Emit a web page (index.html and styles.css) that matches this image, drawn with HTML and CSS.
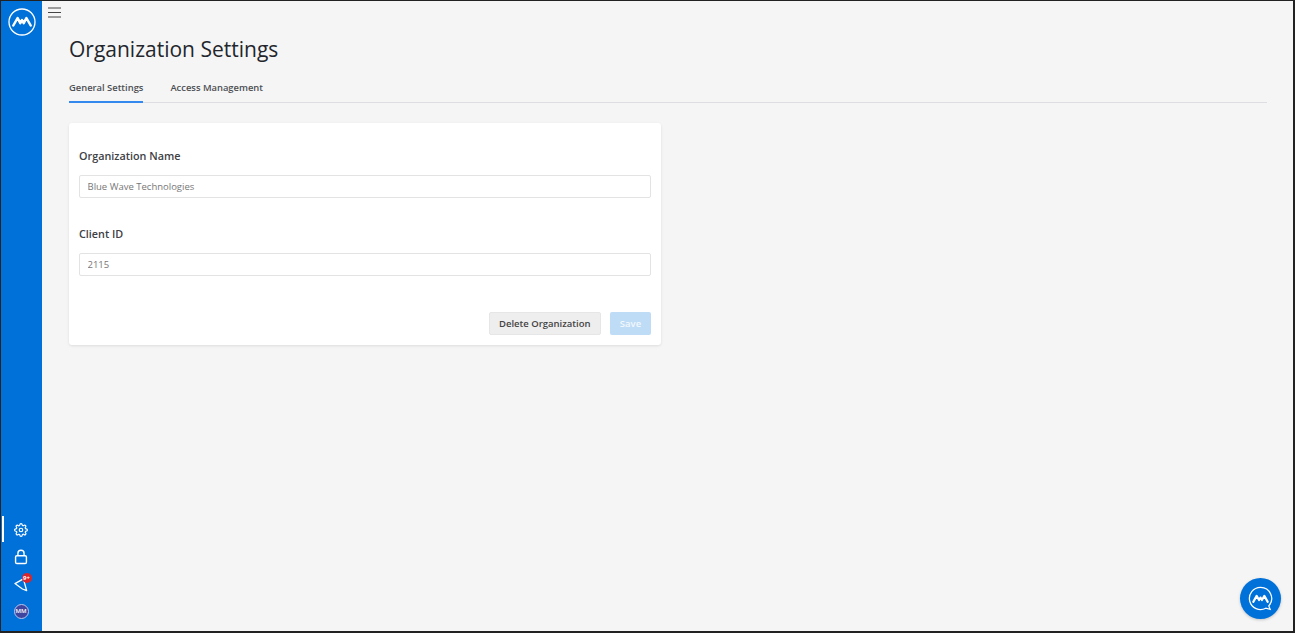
FILE: index.html
```html
<!DOCTYPE html>
<html lang="en">
<head>
<meta charset="utf-8">
<title>Organization Settings</title>
<link rel="stylesheet" href="styles.css">
</head>
<body>
<div class="frame">
  <aside class="sidebar">
    <svg class="logo" viewBox="0 0 28 28" width="28" height="28" fill="none">
      <circle cx="14" cy="14" r="13" stroke="#fff" stroke-width="1.300"/>
      <path d="M5.300 17.500 9.600 10 12.300 15.200 14 12 15.700 15.200 18.400 10 22.700 17.500" stroke="#fff" stroke-width="2.500" stroke-linejoin="round" stroke-linecap="round"/>
    </svg>
    <nav class="side-nav">
      <a class="side-item active">
        <svg viewBox="0 0 24 24" width="14" height="14" fill="none" stroke="#fff" stroke-width="2"><circle cx="12" cy="12" r="3"/><path d="M19.4 15a1.65 1.65 0 0 0 .33 1.82l.06.06a2 2 0 0 1 0 2.83 2 2 0 0 1-2.83 0l-.06-.06a1.65 1.65 0 0 0-1.82-.33 1.65 1.65 0 0 0-1 1.51V21a2 2 0 0 1-2 2 2 2 0 0 1-2-2v-.09A1.65 1.65 0 0 0 9 19.4a1.65 1.65 0 0 0-1.82.33l-.06.06a2 2 0 0 1-2.83 0 2 2 0 0 1 0-2.83l.06-.06a1.65 1.65 0 0 0 .33-1.82 1.65 1.65 0 0 0-1.51-1H3a2 2 0 0 1-2-2 2 2 0 0 1 2-2h.09A1.65 1.65 0 0 0 4.600 9a1.65 1.65 0 0 0-.33-1.82l-.06-.06a2 2 0 0 1 0-2.83 2 2 0 0 1 2.83 0l.06.06a1.65 1.65 0 0 0 1.82.33H9a1.65 1.65 0 0 0 1-1.51V3a2 2 0 0 1 2-2 2 2 0 0 1 2 2v.09a1.65 1.65 0 0 0 1 1.51 1.65 1.65 0 0 0 1.82-.33l.06-.06a2 2 0 0 1 2.83 0 2 2 0 0 1 0 2.83l-.06.06a1.65 1.65 0 0 0-.33 1.82V9a1.65 1.65 0 0 0 1.51 1H21a2 2 0 0 1 2 2 2 2 0 0 1-2 2h-.09a1.65 1.65 0 0 0-1.51 1z"/></svg>
      </a>
      <a class="side-item">
        <svg viewBox="0 0 16 18" width="14" height="16" fill="none" stroke="#fff" stroke-width="1.600"><rect x="1.800" y="7.500" width="12.400" height="9" rx="1.500"/><path d="M4.500 7.500V4.800a3.500 3.500 0 0 1 7 0v2.700"/></svg>
      </a>
      <a class="side-item">
        <svg viewBox="0 0 16 16" width="15" height="15" fill="none" stroke="#fff" stroke-width="1.400" stroke-linejoin="round"><path d="M1 7 10 2 13.500 14.500 9 12.800 1 7z"/></svg>
        <span class="badge">9+</span>
      </a>
      <a class="side-item">
        <span class="avatar">MM</span>
      </a>
    </nav>
  </aside>
  <main class="main">
    <div class="topbar">
      <svg viewBox="0 0 13 11" width="13" height="11" stroke="#444" stroke-width="1"><path d="M0 1h13M0 5.500h13M0 10h13"/></svg>
    </div>
    <div class="content">
      <h1 class="title">Organization Settings</h1>
      <div class="tabs">
        <a class="tab tab-active">General Settings</a>
        <a class="tab">Access Management</a>
      </div>
      <section class="card">
        <div class="field">
          <label class="label">Organization Name</label>
          <input class="input" type="text" value="Blue Wave Technologies">
        </div>
        <div class="field">
          <label class="label">Client ID</label>
          <input class="input" type="text" value="2115">
        </div>
        <div class="actions">
          <button class="btn btn-grey">Delete Organization</button>
          <button class="btn btn-save">Save</button>
        </div>
      </section>
    </div>
  </main>
  <a class="chat">
    <svg viewBox="0 0 28 28" width="27" height="27" fill="none">
      <path d="M14 2.500a11.500 11.500 0 1 0 5.500 21.600l4.500 1.200-1.400-3.600A11.500 11.500 0 0 0 14 2.500z" stroke="#fff" stroke-width="1.300"/>
      <path d="M6.500 17.500 10 11.300l2.500 4.300L14 13l1.500 2.600 2.500-4.300L21.500 17.500" stroke="#fff" stroke-width="2.200" stroke-linejoin="round" stroke-linecap="round"/>
    </svg>
  </a>
</div>
</body>
</html>
```

FILE: styles.css
```css
* { box-sizing: border-box; }
html, body { margin: 0; height: 100%; }
body { font-family: "Open Sans", "Noto Sans", sans-serif; color: #333; overflow: hidden; }
.frame {
  position: relative;
  display: flex;
  width: 1295px;
  height: 633px;
  border-style: solid;
  border-color: #222;
  border-width: 1px 2px 2px 1px;
  background: #f5f5f5;
}
.sidebar {
  width: 41px;
  flex: none;
  background: #0071d9;
  display: flex;
  flex-direction: column;
  align-items: center;
  padding: 7px 0 5.500px;
}
.logo { display: block; }
.side-nav { margin-top: auto; width: 100%; display: flex; flex-direction: column; }
.side-item {
  position: relative;
  height: 27.300px;
  display: flex;
  align-items: center;
  justify-content: center;
  padding-right: 1px;
}
.side-item.active::before {
  content: "";
  position: absolute;
  left: 1px;
  top: 0;
  width: 2px;
  height: 26px;
  background: #fff;
}
.badge {
  position: absolute;
  left: 20.500px;
  top: 2.500px;
  width: 10px;
  height: 10px;
  border-radius: 50%;
  background: #d9262c;
  color: #fff;
  font-size: 6px;
  font-weight: 700;
  line-height: 10px;
  text-align: center;
}
.avatar {
  width: 15px;
  height: 15px;
  border-radius: 50%;
  background: #3f459f;
  border: 1px solid #b9c6ee;
  color: #fff;
  font-size: 6px;
  font-weight: 600;
  line-height: 13px;
  text-align: center;
}
.main { flex: 1; min-width: 0; display: flex; flex-direction: column; }
.topbar { height: 18px; padding: 6px 0 0 6px; }
.topbar svg { display: block; }
.content { padding: 0 26px 0 27px; }
.title {
  margin: 14px 0 0;
  font-size: 21px;
  line-height: 32px;
  font-weight: 500;
  color: #23262c;
}
.tabs {
  display: flex;
  gap: 27px;
  margin-top: 13px;
  border-bottom: 1px solid #dcdee1;
  height: 25px;
}
.tab {
  font-size: 9.400px;
  font-weight: 600;
  line-height: 20px;
  color: #4c4f54;
  height: 25px;
  white-space: nowrap;
}
.tab-active { border-bottom: 2px solid #3389ee; }
.card {
  width: 592px;
  margin-top: 19.500px;
  padding: 15.500px 10px 10.500px;
  background: #fff;
  border-radius: 3px;
  box-shadow: 0 1px 3px rgba(0,0,0,.1);
}
.field { margin-bottom: 18.500px; }
.label {
  display: block;
  font-size: 10.800px;
  line-height: 36px;
  font-weight: 600;
  color: #3d4045;
}
.input {
  display: block;
  width: 100%;
  height: 22.500px;
  margin-top: 1px;
  padding: 0 7.500px;
  border: 1px solid #e3e3e3;
  border-radius: 2px;
  font: 9.500px "Open Sans", sans-serif;
  color: #777;
  background: #fff;
}
.actions { display: flex; justify-content: flex-end; gap: 9.500px; margin-top: 36.500px; }
.btn {
  height: 22.500px;
  border: 1px solid transparent;
  border-radius: 2px;
  font: 600 9.500px "Open Sans", sans-serif;
  padding: 0;
  white-space: nowrap;
}
.btn-grey { width: 111.500px; background: #eee; border-color: #e6e6e6; color: #444; }
.btn-save { width: 41px; background: #bfdcf6; color: #f2f8fd; }
.chat {
  position: absolute;
  right: 12px;
  bottom: 12px;
  width: 41px;
  height: 41px;
  border-radius: 50%;
  background: #0071d9;
  display: flex;
  align-items: center;
  justify-content: center;
  box-shadow: 0 1px 3px rgba(0,0,0,.2);
}
```
